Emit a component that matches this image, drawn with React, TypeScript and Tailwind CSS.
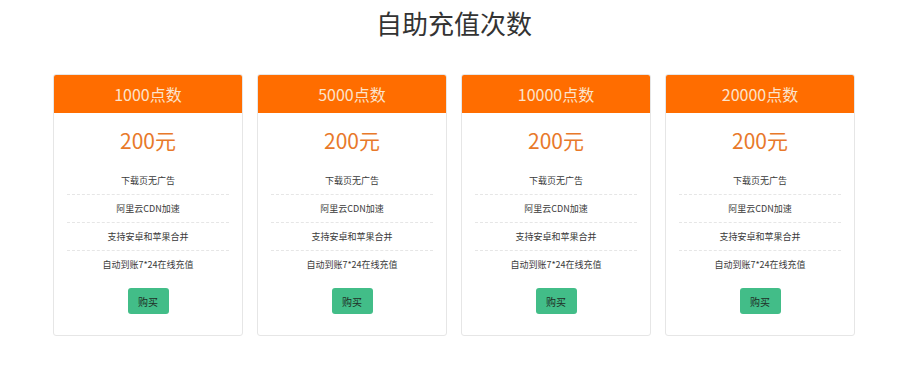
import React from 'react';

const plans = ['1000点数', '5000点数', '10000点数', '20000点数'];
const features = ['下载页无广告', '阿里云CDN加速', '支持安卓和苹果合并', '自动到账7*24在线充值'];

export default function App() {
  return (
    <div
      className="w-[900px] h-[387px] bg-white text-[#333]"
      style={{ fontFamily: '"Microsoft YaHei", "Noto Sans CJK SC", "Open Sans", sans-serif' }}
    >
      <h1 className="pt-[5px] pl-[8px] text-center text-[26px] leading-[36px] text-[#333]">自助充值次数</h1>
      <div className="mt-[33px] flex justify-center gap-[14px] pl-[8px]">
        {plans.map((p) => (
          <div key={p} className="w-[190px] h-[262px] rounded-[3px] border border-[#e6e6e6] bg-white overflow-hidden">
            <div className="h-[39px] -mx-px -mt-px bg-[#ff6d00] rounded-t-[3px] flex items-center justify-center text-[16px] text-[#fbe3cc]">
              {p}
            </div>
            <div className="mt-[12px] text-center text-[21px] leading-[30px] text-[#e8792a]">200元</div>
            <ul className="mt-[12px] mx-[13px]">
              {features.map((f, i) => (
                <li
                  key={f}
                  className={
                    'h-[28px] flex items-center justify-center text-[9px] text-[#3a3a3a] ' +
                    (i < features.length - 1 ? 'border-b border-dashed border-[#e6e6e6]' : '')
                  }
                >
                  {f}
                </li>
              ))}
            </ul>
            <div className="mt-[9px] flex justify-center">
              <button className="w-[41px] h-[26px] rounded-[3px] bg-[#42bd88] text-[10px] text-[#1f2d26]">购买</button>
            </div>
          </div>
        ))}
      </div>
    </div>
  );
}
